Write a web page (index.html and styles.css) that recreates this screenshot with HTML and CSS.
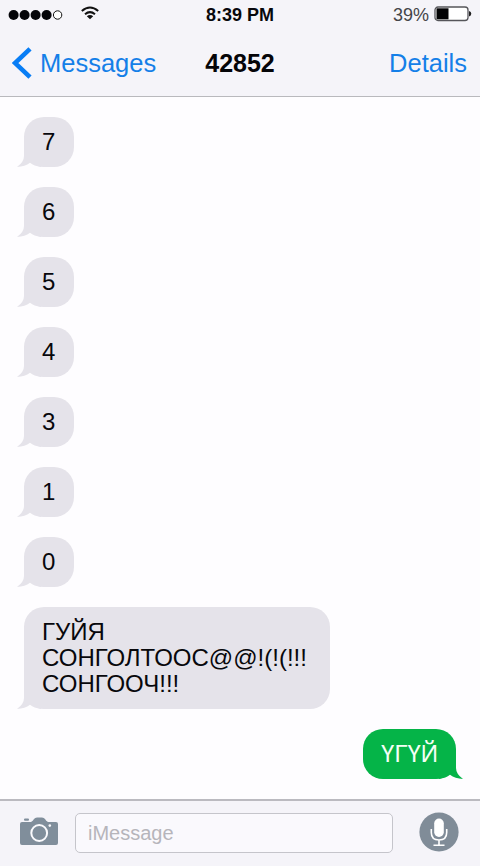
FILE: index.html
```html
<!DOCTYPE html>
<html lang="mn">
<head>
<meta charset="utf-8">
<title>Messages</title>
<link rel="stylesheet" href="styles.css">
</head>
<body>
<svg class="defs" width="0" height="0"><symbol id="tail" viewBox="0 0 24 22"><path d="M7 0V10Q7 16 0 21Q8 20.5 13 16.8Q17 20 24 21V0Z"/></symbol></svg>
<div class="phone">
  <header class="top">
    <div class="status">
      <div class="status-left">
        <svg class="signal" width="56" height="12" viewBox="0 0 56 12">
          <g fill="#050509"><circle cx="5.6" cy="6" r="5"/><circle cx="16.6" cy="6" r="5"/><circle cx="27.6" cy="6" r="5"/><circle cx="38.6" cy="6" r="5"/></g>
          <circle cx="49.6" cy="6" r="4.2" fill="#fff" stroke="#111" stroke-width="1"/>
        </svg>
        <svg class="wifi" width="18" height="14" viewBox="0 0 18 14">
          <g fill="none" stroke="#111" stroke-width="2"><path d="M.8 5Q9-2 17.2 5"/><path d="M4 8.2Q9 4 14 8.2"/></g>
          <path d="M5.8 10.2Q9 7.7 12.2 10.2L9 13.2Z" fill="#111"/>
        </svg>
      </div>
      <span class="time">8:39 PM</span>
      <div class="status-right">
        <span>39%</span>
        <svg width="38" height="16" viewBox="0 0 38 16">
          <rect x="1" y="1" width="33" height="13.5" rx="3" fill="#fff" stroke="#55555a" stroke-width="1.3"/>
          <path d="M2.5 2.3H14.5V13.3H2.5Z" fill="#020204"/>
          <path d="M35 5Q37.3 5.5 37.3 7.8T35 10.5Z" fill="#222"/>
        </svg>
      </div>
    </div>
    <nav class="nav">
      <a class="back"><svg width="20" height="32" viewBox="0 0 20 32"><path d="M18 1.8L3 16L18 30.2" fill="none" stroke="#087df5" stroke-width="4.6"/></svg><span>Messages</span></a>
      <h1>42852</h1>
      <a class="details">Details</a>
    </nav>
  </header>
  <main class="thread">
    <div class="bubble">7<svg class="tail"><use href="#tail"/></svg></div>
    <div class="bubble">6<svg class="tail"><use href="#tail"/></svg></div>
    <div class="bubble">5<svg class="tail"><use href="#tail"/></svg></div>
    <div class="bubble">4<svg class="tail"><use href="#tail"/></svg></div>
    <div class="bubble">3<svg class="tail"><use href="#tail"/></svg></div>
    <div class="bubble">1<svg class="tail"><use href="#tail"/></svg></div>
    <div class="bubble">0<svg class="tail"><use href="#tail"/></svg></div>
    <div class="bubble long">ГУЙЯ<br>СОНГОЛТООС@@!(!(!!!<br>СОНГООЧ!!!<svg class="tail"><use href="#tail"/></svg></div>
    <div class="bubble sent">ҮГҮЙ<svg class="tail"><use href="#tail"/></svg></div>
  </main>
  <footer class="composer">
    <svg class="camera" width="38" height="29" viewBox="0 0 38 29">
      <path d="M2 5H11Q13 4 14 2Q15 .5 17 .5H22Q24 .5 25 2Q26 4 28 5H36Q38 5 38 7V26Q38 28 36 28H2Q0 28 0 26V7Q0 5 2 5Z" fill="#808e9b"/>
      <rect x="4" y="1.6" width="5" height="2.2" rx="1" fill="#808e9b"/>
      <circle cx="19.2" cy="16" r="7.9" fill="#808e9b" stroke="#fafafd" stroke-width="2"/>
      <circle cx="29.8" cy="8.6" r="1.3" fill="#f8f8fc"/>
    </svg>
    <div class="field">iMessage</div>
    <svg class="mic" width="40" height="40" viewBox="0 0 40 40">
      <circle cx="20" cy="20" r="19.6" fill="#808c98"/>
      <rect x="15.2" y="6.5" width="9.6" height="18.5" rx="4.8" fill="#fff"/>
      <path d="M12.3 17V20.5Q12.3 28 20 28T27.7 20.5V17M20 28V33M14.5 33.3H25.5" fill="none" stroke="#fff" stroke-width="1.6"/>
    </svg>
  </footer>
</div>
</body>
</html>
```
FILE: styles.css
```css
* { box-sizing: border-box; }
body { margin: 0; font-family: "Liberation Sans", Arial, sans-serif; color: #08080c; }
.defs { position: absolute; }
.phone { display: flex; flex-direction: column; width: 480px; height: 866px; background: #fefdff; overflow: hidden; }
.top { height: 97px; background: #f5f4f9; border-bottom: 1px solid #b9b9bd; }
.status { display: grid; grid-template-columns: 1fr auto 1fr; align-items: center; height: 30px; padding: 0 8px; font-size: 18px; }
.status-left { display: flex; align-items: center; gap: 17px; }
.wifi { margin-top: -4px; }
.time { font-weight: bold; }
.status-right { display: flex; align-items: center; justify-content: flex-end; gap: 5px; color: #444448; }
.status-right svg { margin: -2px 0 0; }
.nav { display: grid; grid-template-columns: 1fr auto 1fr; align-items: center; height: 66px; padding: 0 12px; font-size: 25.5px; color: #147fe8; }
.nav h1 { margin: 0; font-size: 25px; color: #050508; }
.back { display: flex; align-items: center; gap: 8px; }
.details { text-align: right; padding-right: 1px; }
.thread { display: flex; flex: 1; flex-direction: column; align-items: flex-start; gap: 20px; padding: 20px 24px 0; }
.bubble { position: relative; min-width: 50px; min-height: 50px; padding: 12px 18px; border-radius: 20px; background: #e5e3ea; font-size: 24px; line-height: 26px; white-space: nowrap; }
.tail { position: absolute; left: -7px; bottom: -1px; width: 24px; height: 22px; fill: #e5e3ea; }
.long { width: 306px; }
.sent { align-self: flex-end; background: #05b448; color: #f4fff6; }
.sent .tail { right: -7px; left: auto; transform: scaleX(-1); fill: #05b448; }
.composer { display: flex; align-items: center; height: 67px; padding: 0 21px 2px 20px; background: #f5f4f9; border-top: 2px solid #bbbac0; }
.camera { margin-top: -3px; }
.mic { margin-top: -2px; }
.field { flex: 1; height: 40px; margin: 0 26px 0 17px; padding: 0 12px; border: 1px solid #c5c5cb; border-radius: 5px; background: #faf9fd; color: #b6b5bb; font-size: 20px; line-height: 38px; }
```
